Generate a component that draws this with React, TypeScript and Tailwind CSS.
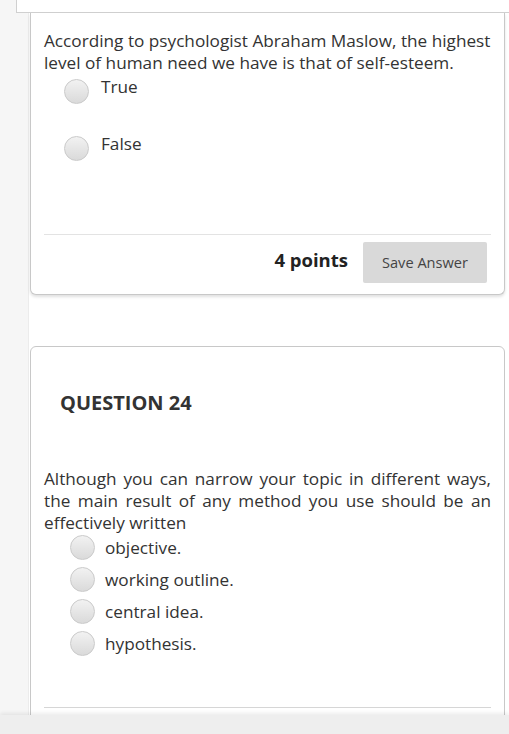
const q23Options = ["True", "False"];
const q24Options = ["objective.", "working outline.", "central idea.", "hypothesis."];

function Radio({ className = "" }: { className?: string }) {
  return (
    <span
      className={`block w-[25px] h-[25px] shrink-0 rounded-full border border-[#cacaca] bg-gradient-to-b from-[#f2f2f2] to-[#dadada] ${className}`}
    />
  );
}

export default function App() {
  return (
    <div className="relative h-[734px] overflow-hidden bg-[#f6f6f6] text-[#333] font-['Open_Sans',sans-serif]">
      {/* top strip of previous block */}
      <div className="ml-4 h-[13px] border-l border-b border-[#d0d0d0] bg-white" />

      <div className="ml-[28px] h-full bg-white border-l border-[#ececec] pl-[1px] pr-[4px]">
        {/* Question 23 (continued) */}
        <div className="border-x border-b border-[#c8c8c8] rounded-b-[6px] bg-white shadow-[0_2px_3px_rgba(0,0,0,0.12)] px-[13px] pt-[17px] pb-[11px]">
          <p className="text-[17.2px] leading-[22px]">
            According to psychologist Abraham Maslow, the highest level of human need we have is that of self-esteem.
          </p>
          <div className="flex flex-col gap-[29px] mt-[2px]">
            {q23Options.map((o) => (
              <label key={o} className="flex items-start h-[28px] pl-[20px]">
                <Radio className="mt-[3px]" />
                <span className="ml-[12px] text-[17.2px] leading-[22px]">{o}</span>
              </label>
            ))}
          </div>
          <div className="mt-[73px] border-t border-[#e3e3e3]" />
          <div className="flex items-center justify-end gap-[15px] pt-[7px] pr-[4px]">
            <span className="mb-[5px] text-[18.5px] font-bold text-[#222]">4 points</span>
            <button className="w-[124px] h-[41px] bg-[#d9d9d9] rounded-[2px] text-[14.6px] text-[#444]">
              Save Answer
            </button>
          </div>
        </div>

        {/* Question 24 */}
        <div className="mt-[51px] border border-[#c8c8c8] rounded-[6px] bg-white px-[13px] pt-[42px] pb-[40px]">
          <h2 className="pl-[16px] text-[20px] leading-[28px] font-bold text-[#333]">QUESTION 24</h2>
          <p className="mt-[51px] text-[17.2px] leading-[22px] text-justify">
            Although you can narrow your topic in different ways, the main result of any method you use should be an effectively written
          </p>
          <div className="flex flex-col gap-[4px] mt-[1px]">
            {q24Options.map((o) => (
              <label key={o} className="flex items-start h-[28px] pl-[26px]">
                <Radio />
                <span className="ml-[10px] text-[17.2px] leading-[26px]">{o}</span>
              </label>
            ))}
          </div>
          <div className="mt-[48px] border-t border-[#d6d6d6]" />
        </div>
      </div>

      {/* bottom bar */}
      <div className="absolute left-0 right-0 bottom-0 h-[19px] bg-[#eeeeee] shadow-[0_-2px_4px_rgba(0,0,0,0.08)]" />
    </div>
  );
}
